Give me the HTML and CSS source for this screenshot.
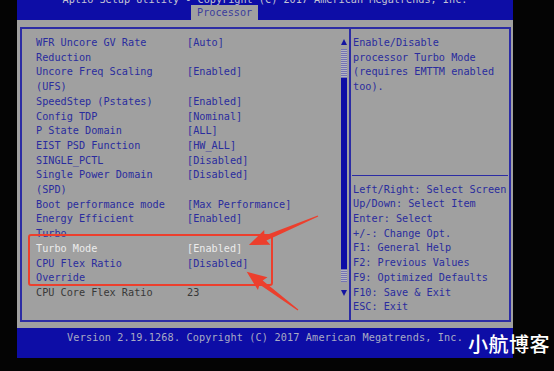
FILE: index.html
```html
<!DOCTYPE html>
<html lang="en">
<head>
<meta charset="utf-8">
<title>Aptio Setup Utility - Processor</title>
<link rel="stylesheet" href="styles.css">
</head>
<body>
<div class="screen">
    <div class="topBar">
        <div class="title">Aptio Setup Utility - Copyright (C) 2017 American Megatrends, Inc.</div>
        <div class="tab">Processor</div>
    </div>

    <div class="mainArea">
        <div class="frame">
            <div class="leftPanel">
                <div class="itemList">
                    <div class="row"><span class="label">WFR Uncore GV Rate<br>Reduction</span><span class="value">[Auto]</span></div>
                    <div class="row"><span class="label">Uncore Freq Scaling<br>(UFS)</span><span class="value">[Enabled]</span></div>
                    <div class="row"><span class="label">SpeedStep (Pstates)</span><span class="value">[Enabled]</span></div>
                    <div class="row"><span class="label">Config TDP</span><span class="value">[Nominal]</span></div>
                    <div class="row"><span class="label">P State Domain</span><span class="value">[ALL]</span></div>
                    <div class="row"><span class="label">EIST PSD Function</span><span class="value">[HW_ALL]</span></div>
                    <div class="row"><span class="label">SINGLE_PCTL</span><span class="value">[Disabled]</span></div>
                    <div class="row"><span class="label">Single Power Domain<br>(SPD)</span><span class="value">[Disabled]</span></div>
                    <div class="row"><span class="label">Boot performance mode</span><span class="value">[Max Performance]</span></div>
                    <div class="row"><span class="label">Energy Efficient<br>Turbo</span><span class="value">[Enabled]</span></div>
                    <div class="row selected"><span class="label">Turbo Mode</span><span class="value">[Enabled]</span></div>
                    <div class="row"><span class="label">CPU Flex Ratio<br>Override</span><span class="value">[Disabled]</span></div>
                    <div class="row inactive"><span class="label">CPU Core Flex Ratio</span><span class="value">23</span></div>
                </div>
                <div class="scrollBar">
                    <div class="arrowUp"></div>
                    <div class="track trackTop"></div>
                    <div class="thumb"></div>
                    <div class="track trackBottom"></div>
                    <div class="arrowDown"></div>
                </div>
            </div>
            <div class="rightPanel">
                <div class="helpText">Enable/Disable<br>processor Turbo Mode<br>(requires EMTTM enabled<br>too).</div>
                <div class="keyHelp">
                    Left/Right: Select Screen<br>
                    Up/Down: Select Item<br>
                    Enter: Select<br>
                    +/-: Change Opt.<br>
                    F1: General Help<br>
                    F2: Previous Values<br>
                    F9: Optimized Defaults<br>
                    F10: Save &amp; Exit<br>
                    ESC: Exit
                </div>
            </div>
        </div>
    </div>

    <div class="bottomBar">Version 2.19.1268. Copyright (C) 2017 American Megatrends, Inc.</div>
</div>

<!-- annotation drawn over the photo -->
<svg class="marks" width="554" height="371" viewBox="0 0 554 371">
    <rect x="29" y="235" width="243" height="50" rx="2" fill="none" stroke="#ec3f2d" stroke-width="2"/>
    <polygon transform="translate(318 216) rotate(157.2)" fill="#ec3f2d"
        points="0,-0.6 57,-2.6 55,-8 75,0 55,8 57,2.6 0,0.6"/>
    <polygon transform="translate(298 310) rotate(216.7)" fill="#ec3f2d"
        points="0,-0.6 46,-2.6 44,-8 64,0 44,8 46,2.6 0,0.6"/>
</svg>

<div class="watermark">小航博客</div>
</body>
</html>
```

FILE: styles.css
```css
body {
	margin: 0;
	width: 554px;
	height: 371px;
	background-color: #040404;
	font-family: "DejaVu Sans Mono", "Liberation Mono", monospace;
	font-size: 10.2px;
	line-height: 14.7px;
	position: relative;
	overflow: hidden;
}

.screen {
	margin-left: 17px;
	width: 496px;
}

.topBar {
	height: 20px;
	background-color: #0d0da6;
	overflow: hidden;
	display: flex;
	flex-direction: column;
	align-items: center;
}
.title {
	margin-top: -7px;
	line-height: 14px;
	color: #c4c4d4;
	white-space: nowrap;
}
.tab {
	align-self: flex-start;
	margin-left: 174px;
	margin-top: -2px;
	height: 15px;
	padding: 0 6px;
	line-height: 16px;
	background-color: #a0a0a0;
	color: #3a3c9c;
}

.mainArea {
	height: 308px;
	box-sizing: border-box;
	padding: 7px 2px 6px 3px;
	background-color: #a0a0a0;
}
.frame {
	height: 100%;
	box-sizing: border-box;
	border: 2px solid #2c2ca4;
	display: flex;
}

.leftPanel {
	width: 327px;
	display: flex;
}
.itemList {
	flex: 1;
	padding: 7px 0 0 14px;
	color: #2a2c9e;
}
.row {
	display: flex;
	white-space: nowrap;
}
.label {
	width: 151px;
}
.selected {
	color: #ececec;
}
.inactive {
	color: #383838;
}

.scrollBar {
	width: 7px;
	margin-right: 2px;
	display: flex;
	flex-direction: column;
	align-items: center;
}
.arrowUp,
.arrowDown {
	width: 0;
	height: 0;
	border-left: 3.5px solid transparent;
	border-right: 3.5px solid transparent;
}
.arrowUp {
	margin-top: 10px;
	border-bottom: 6px solid #1414a0;
}
.arrowDown {
	margin-top: 8px;
	border-top: 6px solid #1414a0;
}
.track {
	width: 6px;
	background: repeating-linear-gradient(0deg, #7474b4 0 1px, #b4b4c0 1px 2px);
}
.trackTop {
	margin-top: 4px;
	height: 29px;
}
.trackBottom {
	height: 13px;
}
.thumb {
	width: 6px;
	height: 191px;
	background-color: #0d0da6;
}

.rightPanel {
	flex: 1;
	border-left: 2px solid #2c2ca4;
	display: flex;
	flex-direction: column;
	color: #2a2c9e;
	white-space: nowrap;
}
.helpText {
	padding: 7px 0 0 2px;
}
.keyHelp {
	margin: auto 1px 0 1px;
	border-top: 1px solid #2c2ca4;
	padding: 7px 0 5px 1px;
}

.bottomBar {
	height: 30px;
	box-sizing: border-box;
	padding-top: 3px;
	background-color: #0d0da6;
	color: #a8aac4;
	text-align: center;
	letter-spacing: 0.15px;
	white-space: nowrap;
}

.marks {
	position: absolute;
	left: 0;
	top: 0;
}

.watermark {
	position: absolute;
	left: 468px;
	top: 333px;
	font-family: "Noto Sans CJK SC", sans-serif;
	font-size: 20px;
	line-height: 22px;
	font-weight: 500;
	color: #ffffff;
	letter-spacing: 0.5px;
}
```
